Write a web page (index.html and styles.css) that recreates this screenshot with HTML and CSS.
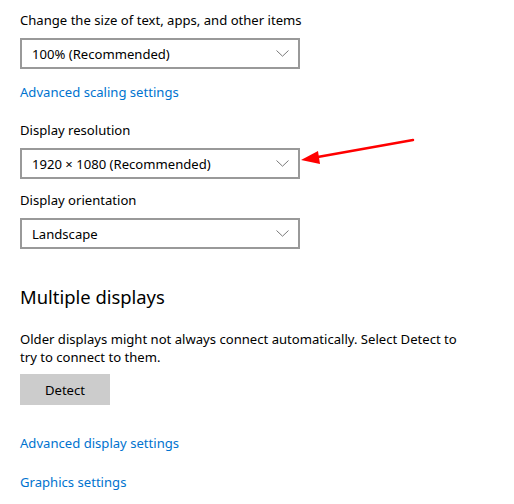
FILE: index.html
```html
<!DOCTYPE html>
<html>
<head>
<meta charset="utf-8">
<link rel="stylesheet" href="styles.css">
</head>
<body>
<div class="page">
  <div class="label first">Change the size of text, apps, and other items</div>
  <div class="select"><span>100% (Recommended)</span><svg class="chev" width="13" height="7" viewBox="0 0 13 7"><path d="M0.5 0.5 L6.5 6.2 L12.5 0.5" fill="none" stroke="#7a7a7a" stroke-width="1"/></svg></div>
  <a class="link l1">Advanced scaling settings</a>
  <div class="label res">Display resolution</div>
  <div class="select"><span>1920 × 1080 (Recommended)</span><svg class="chev" width="13" height="7" viewBox="0 0 13 7"><path d="M0.5 0.5 L6.5 6.2 L12.5 0.5" fill="none" stroke="#7a7a7a" stroke-width="1"/></svg></div>
  <div class="label orient">Display orientation</div>
  <div class="select"><span>Landscape</span><svg class="chev" width="13" height="7" viewBox="0 0 13 7"><path d="M0.5 0.5 L6.5 6.2 L12.5 0.5" fill="none" stroke="#7a7a7a" stroke-width="1"/></svg></div>
  <h2 class="heading">Multiple displays</h2>
  <p class="para">Older displays might not always connect automatically. Select Detect to try to connect to them.</p>
  <div class="button">Detect</div>
  <a class="link l2">Advanced display settings</a>
  <a class="link l3">Graphics settings</a>
</div>
<svg class="arrow" width="514" height="504" viewBox="0 0 514 504">
  <line x1="413" y1="140" x2="312" y2="158" stroke="#f00" stroke-width="2.5" stroke-linecap="round"/>
  <polygon points="301,160 318,151 320,164" fill="#f00"/>
</svg>
</body>
</html>
```
FILE: styles.css
```css
html, body {
  margin: 0;
  padding: 0;
  background: #fff;
}
body {
  font-family: "Noto Sans", "Open Sans", sans-serif;
  font-size: 13.1px;
  color: #000;
  position: relative;
  width: 514px;
  height: 504px;
  overflow: hidden;
}
.page {
  padding: 10px 20px 0 20px;
  display: flex;
  flex-direction: column;
  align-items: flex-start;
}
.label {
  height: 20px;
  line-height: 20px;
  margin-top: 11px;
}
.label.first {
  margin-top: 0;
}
.label.res {
  margin-top: 18px;
}
.label.orient {
  margin-top: 11px;
}
.select {
  box-sizing: border-box;
  width: 280px;
  height: 31px;
  margin-top: 8px;
  border: 2px solid #999;
  display: flex;
  align-items: center;
  justify-content: space-between;
  padding: 0 9px 0 10px;
}
.select span {
  line-height: 20px;
}
.chev {
  display: block;
}
.link {
  color: #0073cf;
  line-height: 20px;
  height: 20px;
}
.l1 {
  margin-top: 13px;
}
.l2 {
  margin-top: 28px;
}
.l3 {
  margin-top: 19px;
}
.heading {
  font-weight: normal;
  font-size: 18.4px;
  line-height: 28px;
  margin: 34px 0 0 0;
}
.para {
  margin: 19px 0 0 0;
  line-height: 18px;
  width: 455px;
}
.button {
  margin-top: 8px;
  width: 90px;
  height: 31px;
  background: #ccc;
  display: flex;
  align-items: center;
  justify-content: center;
}
.arrow {
  position: absolute;
  left: 0;
  top: 0;
  pointer-events: none;
}
```
